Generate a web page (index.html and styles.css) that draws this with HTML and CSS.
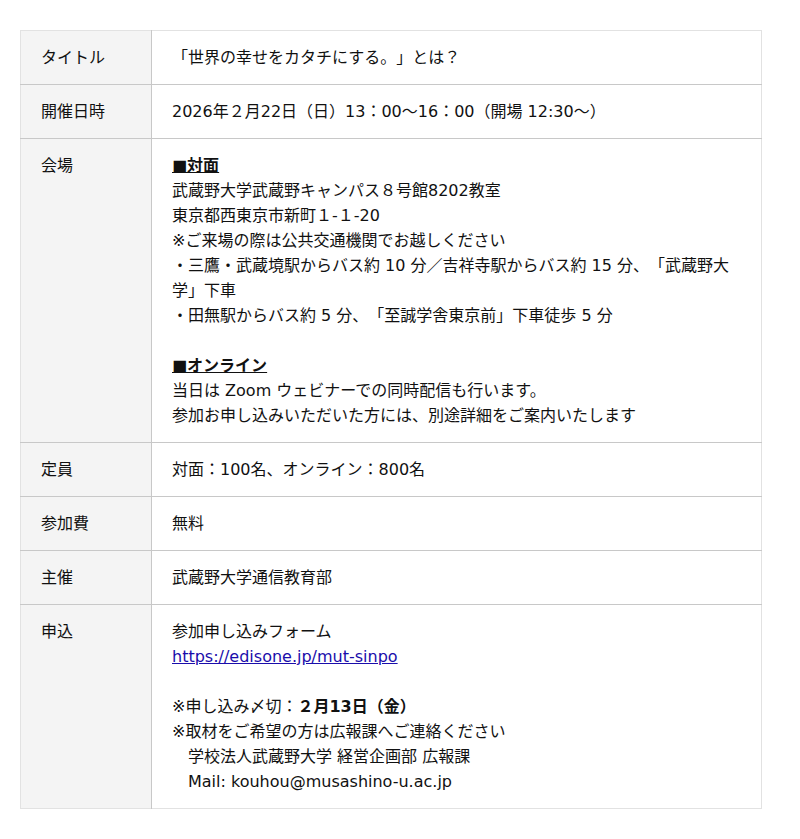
FILE: index.html
```html
<!DOCTYPE html>
<html lang="ja">
<head>
    <meta charset="UTF-8">
    <meta name="viewport" content="width=device-width, initial-scale=1.0">
    <title>イベント概要</title>
    <link rel="stylesheet" href="styles.css">
</head>
<body>
    <main class="page">
        <table class="event-table">
            <tr>
                <th>タイトル</th>
                <td>「世界の幸せをカタチにする。」とは？</td>
            </tr>
            <tr>
                <th>開催日時</th>
                <td>2026年２月22日（日）13：00〜16：00（開場 12:30〜）</td>
            </tr>
            <tr>
                <th>会場</th>
                <td>
                    <strong class="label">■対面</strong><br>
                    武蔵野大学武蔵野キャンパス８号館8202教室<br>
                    東京都西東京市新町１-１-20<br>
                    ※ご来場の際は公共交通機関でお越しください<br>
                    ・三鷹・武蔵境駅からバス約 10 分／吉祥寺駅からバス約 15 分、「武蔵野大学」下車<br>
                    ・田無駅からバス約 5 分、「至誠学舎東京前」下車徒歩 5 分<br>
                    <br>
                    <strong class="label">■オンライン</strong><br>
                    当日は Zoom ウェビナーでの同時配信も行います。<br>
                    参加お申し込みいただいた方には、別途詳細をご案内いたします
                </td>
            </tr>
            <tr>
                <th>定員</th>
                <td>対面：100名、オンライン：800名</td>
            </tr>
            <tr>
                <th>参加費</th>
                <td>無料</td>
            </tr>
            <tr>
                <th>主催</th>
                <td>武蔵野大学通信教育部</td>
            </tr>
            <tr>
                <th>申込</th>
                <td>
                    参加申し込みフォーム<br>
                    <a href="#" class="form-link">https://edisone.jp/mut-sinpo</a><br>
                    <br>
                    ※申し込み〆切：<strong>２月13日（金）</strong><br>
                    ※取材をご希望の方は広報課へご連絡ください<br>
                    　学校法人武蔵野大学 経営企画部 広報課<br>
                    　Mail: kouhou@musashino-u.ac.jp
                </td>
            </tr>
        </table>
    </main>
</body>
</html>
```

FILE: styles.css
```css
* {
    margin: 0;
    padding: 0;
    box-sizing: border-box;
}

body {
    font-family: "DejaVu Sans", "Noto Sans CJK JP", sans-serif;
    font-size: 16px;
    line-height: 25px;
    color: #111;
    background-color: white;
    text-spacing-trim: space-all;
}

.page {
    padding: 30px 38px 30px 20px;
}

.event-table {
    width: 742px;
    border-collapse: collapse;
    border: 1px solid #e2e2e2;
}

.event-table tr {
    border-bottom: 1px solid #c8c8c8;
}

.event-table tr:last-child {
    border-bottom: 1px solid #e2e2e2;
}

.event-table th,
.event-table td {
    padding: 14px 20px 14px 20px;
    text-align: left;
    vertical-align: top;
}

.event-table th {
    width: 131px;
    font-weight: normal;
    background-color: #f4f4f4;
    border-right: 1px solid #c8c8c8;
}

.label {
    text-decoration: underline;
}

.form-link {
    color: #1a0dab;
}
```
